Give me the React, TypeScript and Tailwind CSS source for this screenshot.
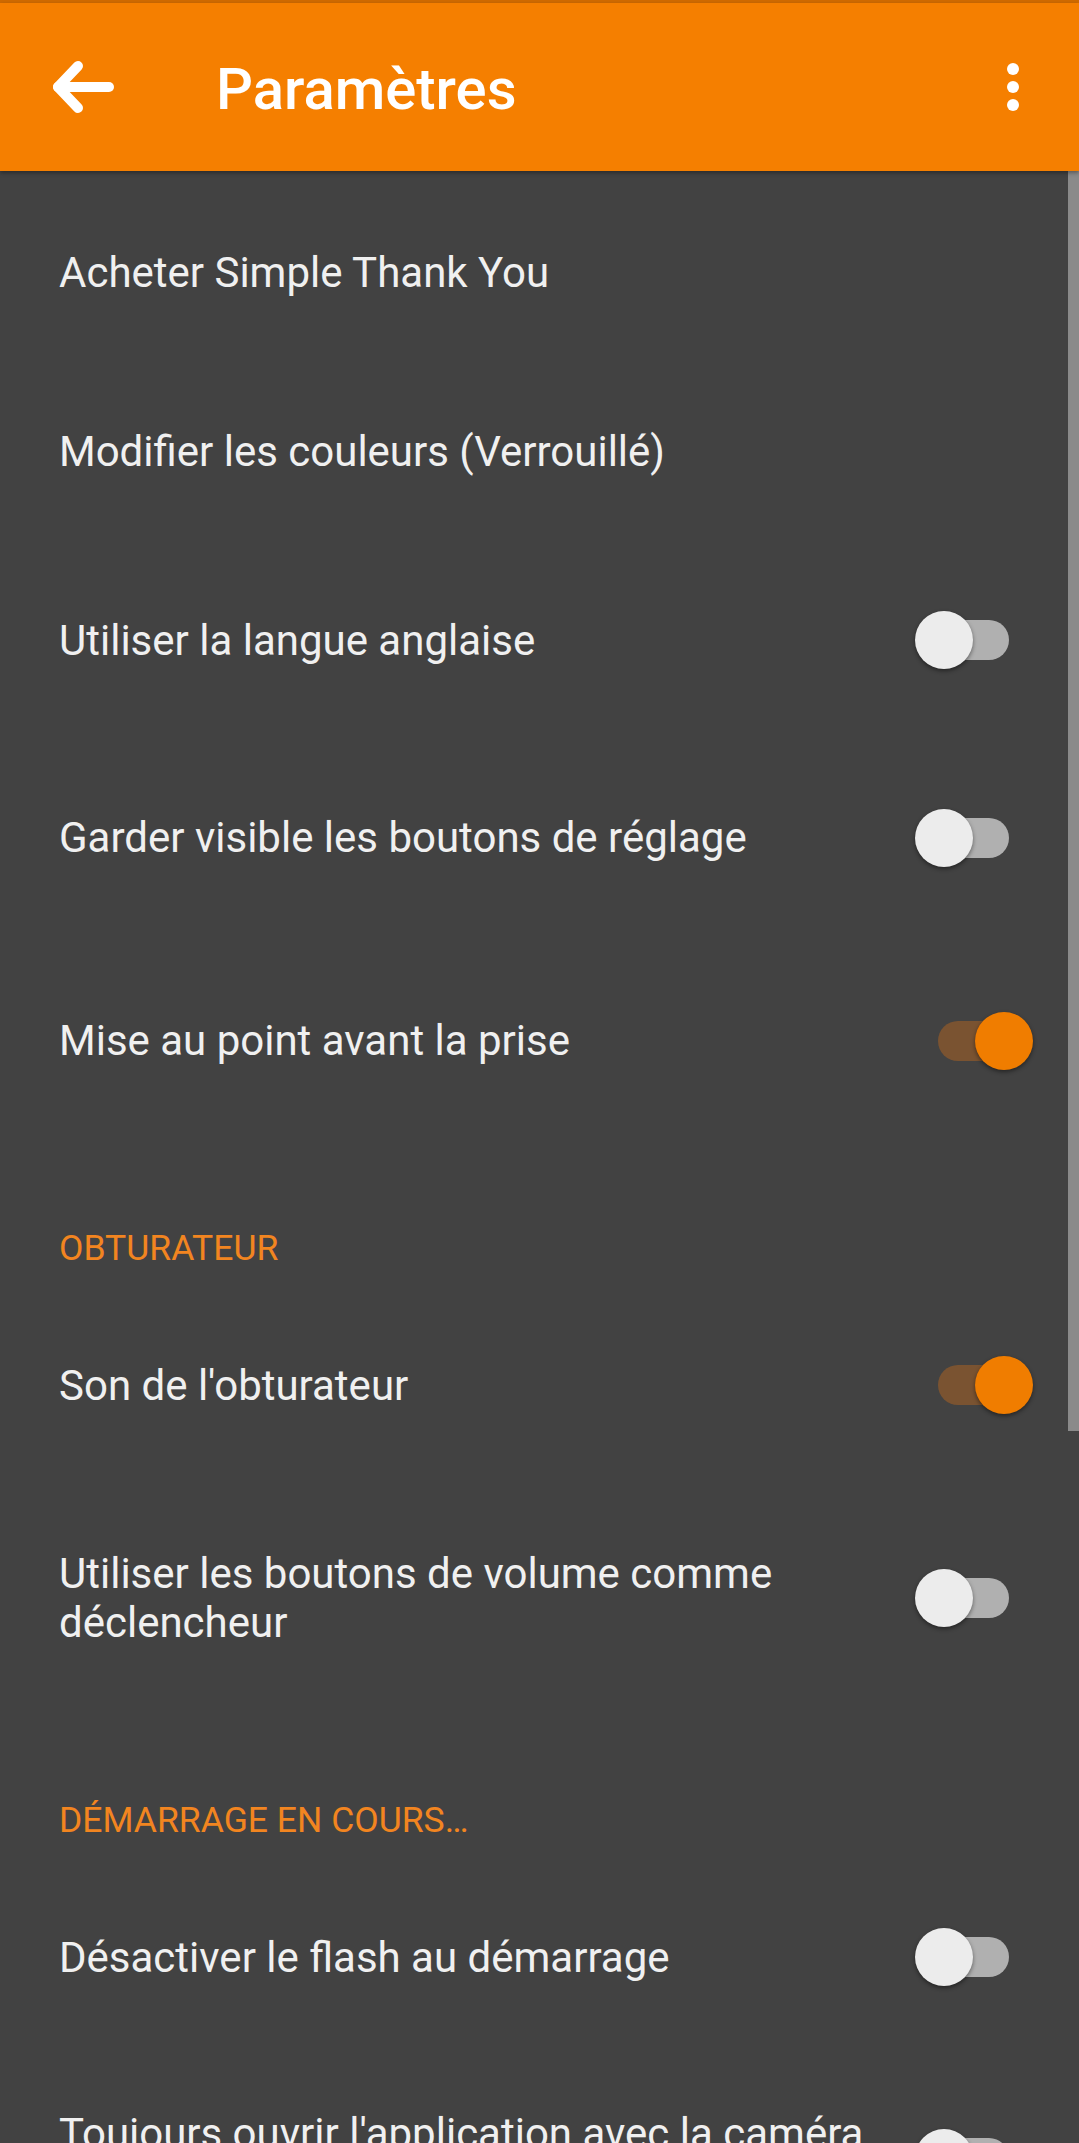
import React from 'react'

type Item =
  | { kind: 'row'; label: string; toggle?: 'on' | 'off'; h: string }
  | { kind: 'section'; label: string; h: string }

const items: Item[] = [
  { kind: 'row', label: 'Acheter Simple Thank You', h: 'h-[174px]' },
  { kind: 'row', label: 'Modifier les couleurs (Verrouillé)', h: 'h-[184px]' },
  { kind: 'row', label: 'Utiliser la langue anglaise', toggle: 'off', h: 'h-[194px]' },
  { kind: 'row', label: 'Garder visible les boutons de réglage', toggle: 'off', h: 'h-[201px]' },
  { kind: 'row', label: 'Mise au point avant la prise', toggle: 'on', h: 'h-[205px]' },
  { kind: 'section', label: 'OBTURATEUR', h: 'h-[144px] pt-[84px]' },
  { kind: 'row', label: "Son de l'obturateur", toggle: 'on', h: 'h-[196px]' },
  { kind: 'row', label: 'Utiliser les boutons de volume comme déclencheur', toggle: 'off', h: 'h-[230px]' },
  { kind: 'section', label: 'DÉMARRAGE EN COURS…', h: 'h-[146px] pt-[86px]' },
  { kind: 'row', label: 'Désactiver le flash au démarrage', toggle: 'off', h: 'h-[196px]' },
  { kind: 'row', label: "Toujours ouvrir l'application avec la caméra frontale", toggle: 'off', h: 'h-[205px]' },
]

function Toggle({ on }: { on: boolean }) {
  return (
    <div className="relative w-[120px] h-[60px] shrink-0">
      <div
        className={`absolute left-[24px] top-[10px] w-[71px] h-[40px] rounded-full ${
          on ? 'bg-[#7a5331]' : 'bg-[#b0b0b0]'
        }`}
      />
      <div
        className={`absolute top-[1px] w-[58px] h-[58px] rounded-full shadow-[0_2px_4px_rgba(0,0,0,0.45)] ${
          on ? 'left-[61px] bg-[#f07d00]' : 'left-[1px] bg-[#ececec]'
        }`}
      />
    </div>
  )
}

export default function App() {
  return (
    <div className="relative w-[1079px] h-[2143px] overflow-hidden bg-[#424242] font-['Roboto','Liberation_Sans',sans-serif]">
      <div className="h-[3px] bg-[#cf6a00]" />
      <header className="relative z-10 h-[168px] bg-[#f57f00] flex items-center shadow-[0_2px_4px_rgba(0,0,0,0.35)]">
        <svg className="ml-[51px] w-[64px] h-[56px]" viewBox="0 0 64 56" fill="none" stroke="white" strokeWidth={10} strokeLinecap="round" strokeLinejoin="round">
          <path d="M58 28H7" />
          <path d="M27 7L7 28l20 21" />
        </svg>
        <h1 className="ml-[101px] pt-[4px] text-[58px] leading-none font-medium text-white">Paramètres</h1>
        <div className="ml-auto mr-[60px] flex flex-col gap-[6px]">
          <div className="w-[12px] h-[12px] rounded-full bg-white" />
          <div className="w-[12px] h-[12px] rounded-full bg-white" />
          <div className="w-[12px] h-[12px] rounded-full bg-white" />
        </div>
      </header>

      <div className="pt-[14px]">
        {items.map((it) =>
          it.kind === 'section' ? (
            <div key={it.label} className={`${it.h} pl-[59px] text-[35.5px] leading-[42px] text-[#f28520]`}>
              {it.label}
            </div>
          ) : (
            <div key={it.label} className={`${it.h} flex items-center pl-[59px] pr-[45px] gap-[14px]`}>
              <div className="flex-1 text-[42px] leading-[49px] text-[#f0f0f0]">{it.label}</div>
              {it.toggle && <Toggle on={it.toggle === 'on'} />}
            </div>
          )
        )}
      </div>

      <div className="absolute right-0 top-[171px] w-[11px] h-[1260px] bg-[#8a8a8a]" />
    </div>
  )
}
